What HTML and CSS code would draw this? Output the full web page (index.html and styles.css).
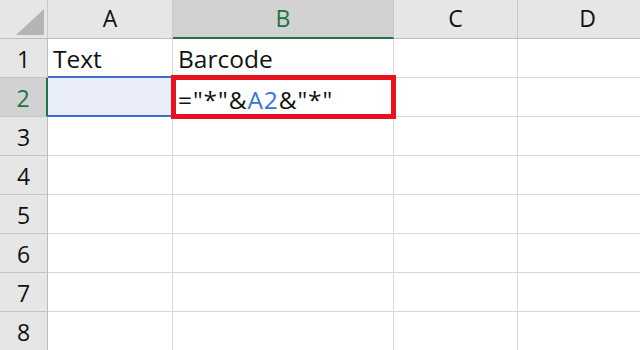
FILE: index.html
```html
<!DOCTYPE html>
<html lang="en">
<head>
  <meta charset="UTF-8" />
  <meta name="viewport" content="width=device-width, initial-scale=1.0" />
  <title>Barcode formula</title>
  <link rel="stylesheet" href="styles.css">
</head>
<body>
  <div class="sheet">
    <div class="corner"><span class="tri"></span></div>
    <div class="col-head">A</div>
    <div class="col-head active">B</div>
    <div class="col-head">C</div>
    <div class="col-head">D</div>

    <div class="row-head">1</div>
    <div class="cell">Text</div>
    <div class="cell">Barcode</div>
    <div class="cell"></div>
    <div class="cell"></div>

    <div class="row-head active">2</div>
    <div class="cell ref"></div>
    <div class="cell formula">="*"&amp;<span class="ref-text">A2</span>&amp;"*"<span class="highlight"></span></div>
    <div class="cell"></div>
    <div class="cell"></div>

    <div class="row-head">3</div>
    <div class="cell"></div><div class="cell"></div><div class="cell"></div><div class="cell"></div>
    <div class="row-head">4</div>
    <div class="cell"></div><div class="cell"></div><div class="cell"></div><div class="cell"></div>
    <div class="row-head">5</div>
    <div class="cell"></div><div class="cell"></div><div class="cell"></div><div class="cell"></div>
    <div class="row-head">6</div>
    <div class="cell"></div><div class="cell"></div><div class="cell"></div><div class="cell"></div>
    <div class="row-head">7</div>
    <div class="cell"></div><div class="cell"></div><div class="cell"></div><div class="cell"></div>
    <div class="row-head">8</div>
    <div class="cell"></div><div class="cell"></div><div class="cell"></div><div class="cell"></div>
  </div>
</body>
</html>
```

FILE: styles.css
```css
body {
  margin: 0;
  padding: 0;
  background-color: white;
  font-family: "Open Sans", "Noto Sans", sans-serif;
  overflow: hidden;
}
.sheet {
  display: grid;
  grid-template-columns: 48px 125px 221px 124px 140px;
  grid-template-rows: repeat(9, 39px);
  color: #111;
}
.corner {
  background-color: #e6e6e6;
  border-right: 1px solid #c8c8c8;
  border-bottom: 1px solid #bcbcbc;
  position: relative;
}
.corner .tri {
  position: absolute;
  left: 16px;
  top: 9px;
  width: 28px;
  height: 26px;
  background-color: #b4b4b4;
  clip-path: polygon(100% 0, 100% 100%, 0 100%);
}
.col-head {
  background-color: #e6e6e6;
  border-right: 1px solid #c8c8c8;
  border-bottom: 1px solid #bcbcbc;
  font-size: 23px;
  text-align: center;
  line-height: 36px;
}
.col-head.active {
  background-color: #d2d2d2;
  border-bottom: 2px solid #217346;
  color: #217346;
}
.row-head {
  background-color: #e6e6e6;
  border-right: 1px solid #bcbcbc;
  border-bottom: 1px solid #c4c4c4;
  font-size: 23px;
  text-align: center;
  line-height: 40px;
}
.row-head.active {
  background-color: #d2d2d2;
  border-right: 2px solid #217346;
  color: #217346;
}
.cell {
  border-right: 1px solid #d8d8d8;
  border-bottom: 1px solid #d8d8d8;
  font-size: 24.5px;
  line-height: 40px;
  padding-left: 5px;
  white-space: nowrap;
}
.cell.ref {
  background-color: #e9eef8;
  border-top: 2px solid #3a6fcf;
  border-bottom: 2px solid #3a6fcf;
  margin-top: -2px;
}
.formula {
  position: relative;
  padding-top: 2px;
  letter-spacing: 0.9px;
}
.ref-text {
  color: #3a72d8;
}
.highlight {
  position: absolute;
  left: -2px;
  top: -3px;
  right: -3px;
  bottom: -3px;
  border: 5px solid #e8121f;
}
```
